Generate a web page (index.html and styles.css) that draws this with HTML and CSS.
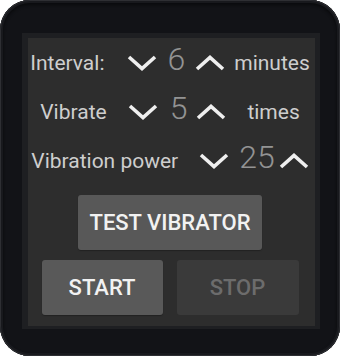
FILE: index.html
```html
<!DOCTYPE html>
<html>
<head>
<meta charset="utf-8">
<link rel="stylesheet" href="styles.css">
</head>
<body>
<div class="watch">
  <div class="ring">
    <div class="screen">
      <div class="row">
        <span class="label g23">Interval:</span>
        <span class="chev g10"><svg viewBox="0 0 30 16" width="30" height="16"><polyline points="2,2 15,13.6 28,2"/></svg></span>
        <span class="value g10">6</span>
        <span class="chev g9"><svg viewBox="0 0 30 16" width="30" height="16"><polyline points="2,14 15,2.4 28,14"/></svg></span>
        <span class="label">minutes</span>
      </div>
      <div class="row">
        <span class="label g21">Vibrate</span>
        <span class="chev g12"><svg viewBox="0 0 30 16" width="30" height="16"><polyline points="2,2 15,13.6 28,2"/></svg></span>
        <span class="value g9">5</span>
        <span class="chev g21"><svg viewBox="0 0 30 16" width="30" height="16"><polyline points="2,14 15,2.4 28,14"/></svg></span>
        <span class="label">times</span>
      </div>
      <div class="row">
        <span class="label g21">Vibration power</span>
        <span class="chev g10"><svg viewBox="0 0 30 16" width="30" height="16"><polyline points="2,2 15,13.6 28,2"/></svg></span>
        <span class="value g4">25</span>
        <span class="chev"><svg viewBox="0 0 30 16" width="30" height="16"><polyline points="2,14 15,2.4 28,14"/></svg></span>
      </div>
      <div class="test-wrap">
        <div class="btn btn-test">TEST VIBRATOR</div>
      </div>
      <div class="actions">
        <div class="btn btn-start">START</div>
        <div class="btn btn-stop">STOP</div>
      </div>
    </div>
  </div>
</div>
</body>
</html>
```

FILE: styles.css
```css
html, body {
  margin: 0;
  padding: 0;
  background: #ffffff;
}
.watch {
  width: 340px;
  height: 356px;
  box-sizing: border-box;
  border-radius: 30px;
  background: #121317;
  box-shadow: inset 0 0 0 1px #2e2f33, inset 0 0 0 3px #18191d, inset 0 2px 3px 3px #0a0b0d;
  padding: 33px 20px 27px 22px;
}
.ring {
  height: 100%;
  box-sizing: border-box;
  background: #1e1f22;
  padding: 5px 5px 3px 6px;
}
.screen {
  height: 100%;
  box-sizing: border-box;
  background: #2d2d2d;
  padding: 1px 3px 0 0;
  font-family: Roboto, "Liberation Sans", sans-serif;
}
.row {
  height: 49px;
  display: flex;
  justify-content: center;
  align-items: baseline;
}
.label {
  font-size: 21px;
  line-height: 24px;
  color: #cecece;
}
.value {
  font-size: 32px;
  font-weight: 300;
  line-height: 40px;
  color: #939393;
}
.chev {
  display: inline-block;
  line-height: 0;
}
.chev svg {
  vertical-align: -1px;
  fill: none;
  stroke: #efefef;
  stroke-width: 3.6;
}
.g4 { margin-right: 4px; }
.g9 { margin-right: 9px; }
.g10 { margin-right: 10px; }
.g12 { margin-right: 12px; }
.g21 { margin-right: 21px; }
.g23 { margin-right: 23px; }

.test-wrap {
  display: flex;
  justify-content: center;
  padding-top: 9px;
}
.btn {
  height: 55px;
  display: flex;
  align-items: center;
  justify-content: center;
  border-radius: 3px;
  font-size: 22px;
  font-weight: 500;
  box-shadow: 0 1px 1px rgba(0, 0, 0, 0.25);
}
.btn-test {
  width: 184px;
  background: #585858;
  color: #f2f2f2;
}
.actions {
  display: flex;
  justify-content: center;
  gap: 14px;
  padding-top: 10px;
}
.btn-start {
  width: 121px;
  background: #595959;
  color: #f2f2f2;
}
.btn-stop {
  width: 122px;
  background: #3a3a3a;
  color: #6c6c6c;
  box-shadow: none;
}
```
